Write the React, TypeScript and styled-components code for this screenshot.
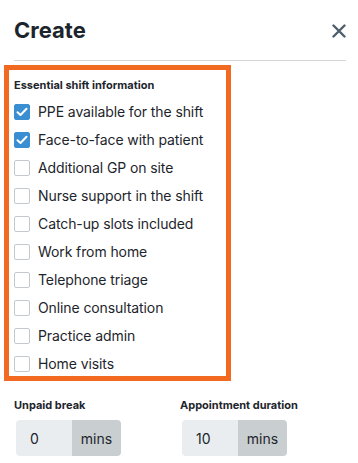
import React, { useState } from "react";
import styled, { createGlobalStyle } from "styled-components";

const GlobalStyle = createGlobalStyle`
  html, body {
    margin: 0;
    padding: 0;
    background: #ffffff;
  }
  body {
    font-family: Inter, Lato, Arial, sans-serif;
    color: #1d252c;
  }
  * {
    box-sizing: border-box;
  }
`;

const Page = styled.div`
  width: 358px;
  height: 463px;
  overflow: hidden;
  background: #ffffff;
`;

const Header = styled.div`
  display: flex;
  align-items: center;
  justify-content: space-between;
  height: 61px;
  margin: 0 12px 0 14px;
  border-bottom: 1px solid #d3d6d9;
`;

const Title = styled.h1`
  margin: 0;
  font-size: 22px;
  line-height: 28px;
  font-weight: 700;
  color: #1d252c;
`;

const CloseButton = styled.button`
  display: flex;
  align-items: center;
  justify-content: center;
  width: 14px;
  height: 14px;
  margin-top: 2px;
  padding: 0;
  border: 0;
  background: none;
  color: #4f5e6b;
  cursor: pointer;
`;

const HighlightBox = styled.div`
  width: 227px;
  margin: 4px 0 0 4px;
  padding: 8px 5px 4px;
  border: 5px solid #f26a21;
`;

const SectionTitle = styled.div`
  font-size: 11px;
  line-height: 14px;
  font-weight: 700;
  margin-bottom: 12px;
`;

const OptionList = styled.div`
  display: flex;
  flex-direction: column;
  gap: 12px;
`;

const Option = styled.label`
  display: flex;
  align-items: center;
  gap: 8px;
  height: 16px;
  font-size: 14px;
  line-height: 16px;
  letter-spacing: -0.1px;
  cursor: pointer;
`;

const Box = styled.span<{ $checked: boolean }>`
  display: flex;
  align-items: center;
  justify-content: center;
  width: 16px;
  height: 16px;
  flex-shrink: 0;
  border-radius: 2px;
  border: 1px solid ${(p) => (p.$checked ? "#3a8fd2" : "#c4c9ce")};
  background: ${(p) => (p.$checked ? "#3a8fd2" : "#ffffff")};
`;

const Fields = styled.div`
  display: grid;
  grid-template-columns: 166px 166px;
  margin: 17px 0 0 14px;
`;

const Field = styled.div`
  display: flex;
  flex-direction: column;
`;

const FieldLabel = styled.div`
  font-size: 11px;
  line-height: 14px;
  font-weight: 700;
  margin-bottom: 8px;
`;

const InputGroup = styled.div`
  display: flex;
  width: 105px;
  height: 36px;
  margin-left: 2px;
  border-radius: 4px;
  overflow: hidden;
  font-size: 14px;
`;

const NumberInput = styled.input`
  width: 56px;
  height: 36px;
  padding: 0 0 0 14px;
  border: 0;
  outline: none;
  background: #e9edef;
  font-family: inherit;
  font-size: 14px;
  color: #1d252c;
`;

const Unit = styled.span`
  display: flex;
  align-items: center;
  justify-content: center;
  flex: 1;
  background: #c9ced1;
  color: #1d252c;
`;

const options = [
  { label: "PPE available for the shift", checked: true },
  { label: "Face-to-face with patient", checked: true },
  { label: "Additional GP on site", checked: false },
  { label: "Nurse support in the shift", checked: false },
  { label: "Catch-up slots included", checked: false },
  { label: "Work from home", checked: false },
  { label: "Telephone triage", checked: false },
  { label: "Online consultation", checked: false },
  { label: "Practice admin", checked: false },
  { label: "Home visits", checked: false },
];

const Checkbox: React.FC<{ checked: boolean; onToggle: () => void; label: string }> = ({
  checked,
  onToggle,
  label,
}) => (
  <Option onClick={onToggle}>
    <Box $checked={checked}>
      {checked && (
        <svg width="12" height="10" viewBox="0 0 12 10" fill="none">
          <path d="M1.5 5.2L4.5 8L10.5 1.8" stroke="#ffffff" strokeWidth="2" strokeLinecap="round" strokeLinejoin="round" />
        </svg>
      )}
    </Box>
    {label}
  </Option>
);

const App: React.FC = () => {
  const [checked, setChecked] = useState(options.map((o) => o.checked));
  const [unpaid, setUnpaid] = useState("0");
  const [duration, setDuration] = useState("10");

  const toggle = (i: number) =>
    setChecked((prev) => prev.map((c, idx) => (idx === i ? !c : c)));

  return (
    <Page>
      <GlobalStyle />
      <Header>
        <Title>Create</Title>
        <CloseButton aria-label="Close">
          <svg width="14" height="14" viewBox="0 0 14 14">
            <path d="M1.5 1.5L12.5 12.5M12.5 1.5L1.5 12.5" stroke="currentColor" strokeWidth="2.4" strokeLinecap="round" />
          </svg>
        </CloseButton>
      </Header>

      <HighlightBox>
        <SectionTitle>Essential shift information</SectionTitle>
        <OptionList>
          {options.map((o, i) => (
            <Checkbox key={o.label} label={o.label} checked={checked[i]} onToggle={() => toggle(i)} />
          ))}
        </OptionList>
      </HighlightBox>

      <Fields>
        <Field>
          <FieldLabel>Unpaid break</FieldLabel>
          <InputGroup>
            <NumberInput value={unpaid} onChange={(e) => setUnpaid(e.target.value)} />
            <Unit>mins</Unit>
          </InputGroup>
        </Field>
        <Field>
          <FieldLabel>Appointment duration</FieldLabel>
          <InputGroup>
            <NumberInput value={duration} onChange={(e) => setDuration(e.target.value)} />
            <Unit>mins</Unit>
          </InputGroup>
        </Field>
      </Fields>
    </Page>
  );
};

export default App;
